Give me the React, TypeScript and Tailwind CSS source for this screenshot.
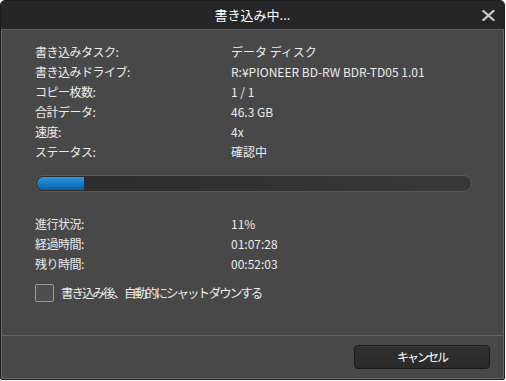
const FONT = { fontFamily: '"Noto Sans CJK JP", "Liberation Sans", sans-serif' };

const infoRows = [
  ['書き込みタスク:', 'データ ディスク'],
  ['書き込みドライブ:', 'R:¥PIONEER BD-RW BDR-TD05 1.01'],
  ['コピー枚数:', '1 / 1'],
  ['合計データ:', '46.3 GB'],
  ['速度:', '4x'],
  ['ステータス:', '確認中'],
];

const timeRows = [
  ['進行状況:', '11%'],
  ['経過時間:', '01:07:28'],
  ['残り時間:', '00:52:03'],
];

function Row({ label, value }: { label: string; value: string }) {
  return (
    <div className="flex h-5 items-center text-[12px] text-[#ececec]">
      <span className="w-[196px] tracking-[-0.5px]">{label}</span>
      <span>{value}</span>
    </div>
  );
}

export default function App() {
  const progress = 11;
  return (
    <div className="h-[381px] w-[506px] bg-white" style={FONT}>
      <div className="flex h-[380px] w-[505px] flex-col overflow-hidden rounded-t-[5px] rounded-b-[2px] border border-[#1c1c1c] bg-[#484848] shadow-[inset_0_0_0_1px_#6a6a6a]">
        <div className="relative flex h-[29px] shrink-0 items-center justify-center border-b border-[#5e5e5e] bg-[#262628]">
          <span className="text-[13px] text-white">書き込み中...</span>
          <svg className="absolute right-[9px] top-[9px]" width="13" height="11" viewBox="0 0 13 11">
            <path d="M1.5 1 L11.5 10 M11.5 1 L1.5 10" stroke="#c8c8c8" strokeWidth="2.2" strokeLinecap="square" />
          </svg>
        </div>

        <div className="flex flex-1 flex-col px-[34px] pt-3">
          {infoRows.map(([l, v]) => (
            <Row key={l} label={l} value={v} />
          ))}

          <div className="mt-[13px] h-[17px] w-[437px] overflow-hidden rounded-full border border-[#5a5a5a] bg-gradient-to-r from-[#2c2c2c] to-[#383838] p-px">
            <div
              className="h-full rounded-l-full bg-gradient-to-b from-[#2a9ae6] to-[#0b5ea4]"
              style={{ width: `${progress * 0.98}%` }}
            />
          </div>

          <div className="mt-[22px]">
            {timeRows.map(([l, v]) => (
              <Row key={l} label={l} value={v} />
            ))}
          </div>

          <label className="mt-[10px] flex h-[18px] items-center gap-[7px] text-[12.5px] leading-[18px] tracking-[-2px] text-[#ececec]">
            <span className="h-[18px] w-[19px] shrink-0 rounded-[2px] border border-[#9a9a9a] bg-[#4e4e50]" />
            書き込み後、自動的にシャット ダウンする
          </label>
        </div>

        <div className="flex h-[44px] shrink-0 items-start justify-end border-t border-[#666] px-[14px] pt-[9px]">
          <button className="h-[24px] w-[136px] rounded-[4px] border border-[#1a1a1a] bg-gradient-to-b from-[#303030] to-[#2a2a2a] text-[12px] tracking-[-2px] text-white shadow-[inset_0_1px_0_#3c3c3c]">
            キャンセル
          </button>
        </div>
      </div>
    </div>
  );
}
